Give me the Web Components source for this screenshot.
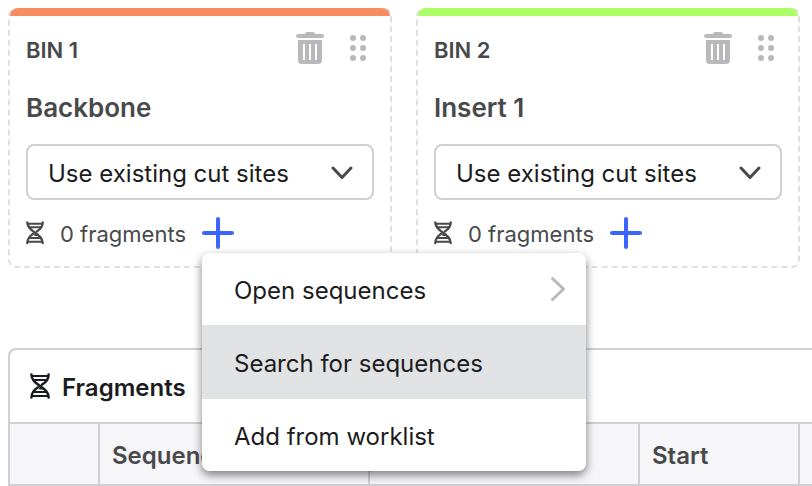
<!DOCTYPE html>
<html lang="en">
<head>
<meta charset="utf-8">
<title>Assembly bins</title>
<style>
  body {
    margin: 0;
    background: #fff;
    color: #1b1c20;
    font: 24px/32px Inter, "Liberation Sans", sans-serif;
    overflow: hidden;
  }
</style>
</head>
<body>
<assembly-page>
  <bin-card name="BIN 1" heading="Backbone" color="#f68c5f">
    <action-menu slot="menu">
      <menu-option submenu>Open sequences</menu-option>
      <menu-option active>Search for sequences</menu-option>
      <menu-option>Add from worklist</menu-option>
    </action-menu>
  </bin-card>
  <bin-card name="BIN 2" heading="Insert 1" color="#aeff66"></bin-card>
  <fragment-table slot="table"></fragment-table>
</assembly-page>

<script>
class BaseElement extends HTMLElement {
  connectedCallback() {
    if (this.shadowRoot) return;
    this.attachShadow({ mode: 'open' }).innerHTML = this.render();
  }
}

customElements.define('assembly-page', class extends BaseElement {
  render() {
    return `
      <style>
        :host { display: flex; flex-direction: column; gap: 80px; padding: 8px 0 0 8px; }
        .bins { display: grid; grid-template-columns: 1fr 1fr; gap: 24px; padding-right: 12px; }
      </style>
      <main class="bins"><slot></slot></main>
      <slot name="table"></slot>`;
  }
});

customElements.define('dna-icon', class extends BaseElement {
  render() {
    return `
      <style>
        :host { display: block; flex: none; width: 20px; }
        svg { display: block; width: 100%; }
      </style>
      <svg viewBox="0 0 20 26" fill="none" stroke="currentColor" stroke-width="2.5" stroke-linecap="round" aria-hidden="true">
        <path d="M1.4 1.4C1.4 12.500 18.600 13.500 18.600 24.600M18.600 1.400C18.600 7 15 9.800 12 11.600M8 14.200C4.500 16.500 1.400 19.200 1.400 24.600"/>
        <path d="M2 3H18M3.500 7H16.500M3.500 19H16.500M2 23H18M10 15.500H13" stroke-width="2.200"/>
      </svg>`;
  }
});

customElements.define('bin-card', class extends BaseElement {
  render() {
    const name = this.getAttribute('name');
    return `
      <style>
        :host {
          display: block; position: relative; box-sizing: border-box;
          border: 2px dashed #e0e0e2; border-radius: 8px;
          padding: 0 16px 16px; color: #48494b;
        }
        .bar { height: 8px; margin: -2px -16px 16px; border-radius: 8px 8px 0 0; background: ${this.getAttribute('color')}; }
        header { display: flex; align-items: center; gap: 24px; height: 32px; padding: 0 6px 0 0; margin: 0 0 24px; }
        h2, h3 { margin: 0; font-weight: 600; line-height: 32px; }
        h2 { flex: 1; padding-top: 4px; font-size: 22px; }
        h3 { font-size: 26px; line-height: 40px; margin: 0 0 16px; }
        button { display: block; padding: 0; border: 0; background: none; color: #b9b9bb; }
        svg { display: block; }
        .pick { position: relative; display: block; }
        select {
          appearance: none; display: block; width: 100%; height: 56px;
          box-sizing: border-box; margin: 0; padding: 4px 56px 0 20px;
          border: 2px solid #d0d0d2; border-radius: 8px;
          background: #fff; color: #1b1c20; font: inherit;
        }
        .pick svg { position: absolute; right: 21px; top: 22px; pointer-events: none; }
        footer { position: relative; display: flex; align-items: center; height: 34px; margin-top: 16px; }
        dna-icon { width: 18px; margin-right: 16px; }
        .count { flex: none; width: 142px; padding-top: 2px; white-space: nowrap; font-size: 22px; }
        .add { color: #3a66ff; }
        ::slotted(action-menu) { position: absolute; left: 176px; top: 37px; z-index: 2; }
      </style>
      <div class="bar"></div>
      <header>
        <h2>${name}</h2>
        <button type="button" aria-label="Delete ${name}">
          <svg width="28" height="32" viewBox="0 0 28 32" fill="currentColor">
            <path d="M2 2H8.500C9.500 2 9.500 0 11 0H17C18.500 0 18.500 2 19.500 2H26A2 2 0 0 1 26 6H2A2 2 0 0 1 2 2Z"/>
            <path fill-rule="evenodd" d="M2 8H26V28A4 4 0 0 1 22 32H6A4 4 0 0 1 2 28ZM7 12V28H9V12ZM13 12V28H15V12ZM19 12V28H21V12Z"/>
          </svg>
        </button>
        <button type="button" aria-label="Move ${name}">
          <svg width="20" height="26" viewBox="0 0 20 26" fill="currentColor">
            <circle cx="5" cy="3" r="3"/><circle cx="15" cy="3" r="3"/>
            <circle cx="5" cy="13" r="3"/><circle cx="15" cy="13" r="3"/>
            <circle cx="5" cy="23" r="3"/><circle cx="15" cy="23" r="3"/>
          </svg>
        </button>
      </header>
      <h3>${this.getAttribute('heading')}</h3>
      <label class="pick">
        <select aria-label="Cut sites for ${name}"><option>Use existing cut sites</option></select>
        <svg width="22" height="14" viewBox="0 0 22 14" fill="none" stroke="#48494b" stroke-width="3" stroke-linecap="round" stroke-linejoin="round"><path d="M2 2L11 11.500L20 2"/></svg>
      </label>
      <footer>
        <dna-icon></dna-icon>
        <span class="count">0 fragments</span>
        <button type="button" class="add" aria-label="Add fragments to ${name}">
          <svg width="32" height="32" viewBox="0 0 32 32" fill="none" stroke="currentColor" stroke-width="4" stroke-linecap="round"><path d="M16 2V30M2 16H30"/></svg>
        </button>
        <slot name="menu"></slot>
      </footer>`;
  }
});

customElements.define('action-menu', class extends BaseElement {
  render() {
    return `
      <style>
        :host {
          display: block; width: 384px; border-radius: 8px; overflow: hidden;
          background: #fff; color: #1b1c20;
          box-shadow: 0 4px 10px rgba(0, 0, 0, .5);
        }
      </style>
      <div role="menu"><slot></slot></div>`;
  }
});

customElements.define('menu-option', class extends BaseElement {
  render() {
    return `
      <style>
        :host { display: block; }
        button {
          display: flex; align-items: center; justify-content: space-between;
          width: 100%; height: 72px; margin: 0; padding: 4px 20px 0 32px;
          border: 0; background: #fff; color: inherit; font: inherit; text-align: left;
        }
        :host([active]) button { height: 74px; background: #e1e2e4; }
        svg { margin-top: -4px; }
      </style>
      <button type="button" role="menuitem"><slot></slot>${this.hasAttribute('submenu') ? `
        <svg width="16" height="26" viewBox="0 0 16 26" fill="none" stroke="#b9b9bb" stroke-width="3" stroke-linecap="round" stroke-linejoin="round"><path d="M2.500 2.500L13.500 13L2.500 23.500"/></svg>` : ''}</button>`;
  }
});

customElements.define('fragment-table', class extends BaseElement {
  render() {
    return `
      <style>
        :host {
          display: block; overflow: hidden;
          border: 2px solid #d0d0d2; border-right: 0; border-radius: 8px 0 0 0;
        }
        header { display: flex; align-items: center; gap: 12px; height: 72px; padding: 0 20px; }
        h2 { margin: 4px 0 0; font-size: 24px; font-weight: 600; }
        table { width: 100%; min-width: 802px; table-layout: fixed; border-collapse: separate; border-spacing: 0; background: #f6f6f9; color: #48494b; }
        th {
          box-sizing: border-box; height: 62px; padding: 4px 12px 0;
          border-top: 2px solid #d0d0d2; border-left: 2px solid #d0d0d2;
          font-size: 24px; font-weight: 600; text-align: left; white-space: nowrap;
        }
        th:first-child { border-left: 0; }
        .mark { width: 88px; }
        .wide { width: 270px; }
        .mid { width: 160px; }
      </style>
      <header><dna-icon></dna-icon><h2>Fragments</h2></header>
      <table>
        <colgroup><col class="mark"><col class="wide"><col class="wide"><col class="mid"><col></colgroup>
        <thead><tr><th></th><th scope="col">Sequence</th><th></th><th scope="col">Start</th><th></th></tr></thead>
      </table>`;
  }
});
</script>
</body>
</html>
